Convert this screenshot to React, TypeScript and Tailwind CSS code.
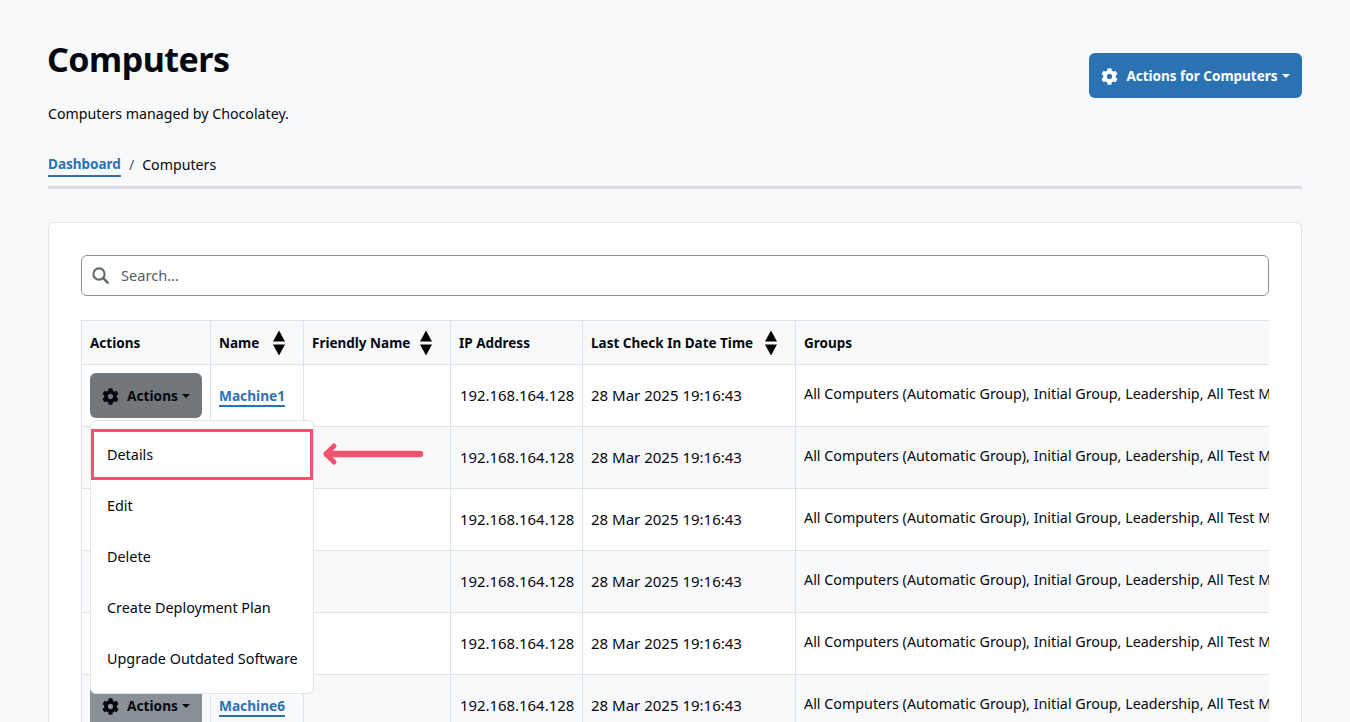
import { FaCog } from "react-icons/fa";

const rows = [
  { name: "Machine1", open: true },
  { name: "", open: false },
  { name: "", open: false },
  { name: "", open: false },
  { name: "", open: false },
  { name: "Machine6", open: false },
];

const groups =
  "All Computers (Automatic Group), Initial Group, Leadership, All Test Machines, Production Servers";

const menuItems = ["Edit", "Delete", "Create Deployment Plan", "Upgrade Outdated Software"];

function SortIcon() {
  return (
    <svg className="w-[14px] h-[26px] text-black" viewBox="0 0 14 26" fill="currentColor">
      <path d="M7 0.5 13 11.5H1z" />
      <path d="M1 14.5h12L7 25.5z" />
    </svg>
  );
}

function SearchIcon() {
  return (
    <svg className="h-[17px] w-[17px] text-[#62696f]" viewBox="0 0 17 17" fill="none" stroke="currentColor" strokeLinecap="round">
      <circle cx="7" cy="7" r="5.6" strokeWidth="2.1" />
      <path d="M11.2 11.2 15.6 15.6" strokeWidth="2.6" />
    </svg>
  );
}

function Caret() {
  return <span className="ml-[4px] inline-block border-x-[4px] border-t-[4px] border-x-transparent border-t-current" />;
}

function Header({ label, sort }: { label: string; sort?: boolean }) {
  return (
    <div className="flex items-center justify-between pr-[17px] whitespace-nowrap">
      <span className="pt-px">{label}</span>
      {sort && <SortIcon />}
    </div>
  );
}

export default function App() {
  return (
    <div className="h-screen overflow-hidden bg-[#f8f9fb] px-12 pt-[34px] text-[14.3px] text-[#05080f] font-['Noto_Sans',sans-serif]">
      <div className="flex items-start justify-between">
        <div>
          <h1 className="-ml-px text-[34px] leading-[50px] font-bold tracking-[-0.5px]">Computers</h1>
          <p className="mt-[19px] text-[14.2px] leading-[22px]">Computers managed by Chocolatey.</p>
        </div>
        <button className="mt-[19px] flex h-[45px] w-[213px] items-center justify-center rounded-md bg-[#2b72b3] pt-px text-[13.5px] font-bold text-white">
          <FaCog className="mr-[8px] text-[17px]" />
          Actions for Computers
          <Caret />
        </button>
      </div>

      <div className="mt-[28px] flex items-center border-b-[3px] border-[#dcdee2] pb-[9px] text-[14.2px] leading-[22px]">
        <a className="border-b-2 border-[#2b72b3] text-[13.5px] font-bold text-[#2b72b3]">Dashboard</a>
        <span className="mx-2 text-[#555]">/</span>
        <span>Computers</span>
      </div>

      <div className="relative mt-[33px] rounded-md border border-[#e3e5e9] bg-white px-8 pt-8">
        <div className="flex h-[41px] items-center rounded-md border border-[#878e96] px-[10px] text-[14.6px] text-[#555c63]">
          <SearchIcon />
          <span className="ml-[12px]">Search...</span>
        </div>

        <div className="mt-[24px] overflow-hidden">
          <table className="w-[1400px] table-fixed border-collapse text-left">
            <colgroup>
              <col className="w-[129px]" />
              <col className="w-[93px]" />
              <col className="w-[147px]" />
              <col className="w-[132px]" />
              <col className="w-[213px]" />
              <col />
            </colgroup>
            <thead>
              <tr className="h-[44px] border-y border-[#dfe2e7] bg-[#f8f9fb] text-[13.5px] font-bold">
                <th className="border-x border-[#dfe2e7] pl-2"><Header label="Actions" /></th>
                <th className="border-x border-[#dfe2e7] pl-2"><Header label="Name" sort /></th>
                <th className="border-x border-[#dfe2e7] pl-2"><Header label="Friendly Name" sort /></th>
                <th className="border-x border-[#dfe2e7] pl-2"><Header label="IP Address" /></th>
                <th className="border-x border-[#dfe2e7] pl-2"><Header label="Last Check In Date Time" sort /></th>
                <th className="border-x border-[#dfe2e7] pl-2"><Header label="Groups" /></th>
              </tr>
            </thead>
            <tbody>
              {rows.map((row, i) => (
                <tr key={i} className={`h-[62px] border-b border-[#dfe2e7] ${i % 2 === 1 ? "bg-[#f8f9fb]" : "bg-white"}`}>
                  <td className="relative border-x border-[#dfe2e7] pl-2">
                    {row.name && (
                      <button
                        className={`flex h-[45px] w-[112px] items-center justify-center rounded-md pt-px text-[13.7px] font-bold text-[#05080f] ${
                          row.open ? "bg-[#72777c]" : "bg-[#899197]"
                        }`}
                      >
                        <FaCog className="mr-[8px] text-[17px]" />
                        Actions
                        <Caret />
                      </button>
                    )}
                    {row.open && (
                      <div className="absolute left-[8px] top-[55px] z-10 w-[224px] rounded-md border border-[#e3e5e9] bg-white pt-[8px] pb-[9px] text-[14.4px] font-normal">
                        <div className="flex h-[51px] items-center border-[3px] border-[#f4536f] pl-[13px]">Details</div>
                        {menuItems.map((item) => (
                          <div key={item} className="flex h-[51px] items-center pl-4">{item}</div>
                        ))}
                      </div>
                    )}
                    {row.open && (
                      <svg className="absolute left-[240px] top-[77px] z-10 h-[24px] w-[104px]" viewBox="0 0 104 24" fill="none" stroke="#f4536f" strokeLinecap="round" strokeLinejoin="round">
                        <path d="M5 12h93" strokeWidth="6.5" />
                        <path d="M12 4 4 12l8 8" strokeWidth="5" />
                      </svg>
                    )}
                  </td>
                  <td className="border-x border-[#dfe2e7] pl-2">
                    {row.name && <a className="border-b-2 border-[#2b72b3] text-[13.7px] font-bold text-[#2b72b3]">{row.name}</a>}
                  </td>
                  <td className="border-x border-[#dfe2e7]" />
                  <td className="border-x border-[#dfe2e7] pl-[9px] text-[14.9px] whitespace-nowrap">192.168.164.128</td>
                  <td className="border-x border-[#dfe2e7] pl-2 text-[15px] whitespace-nowrap">28 Mar 2025 19:16:43</td>
                  <td className="border-x border-[#dfe2e7] pl-2 pb-[3px] whitespace-nowrap">{groups}</td>
                </tr>
              ))}
            </tbody>
          </table>
        </div>
      </div>
    </div>
  );
}
